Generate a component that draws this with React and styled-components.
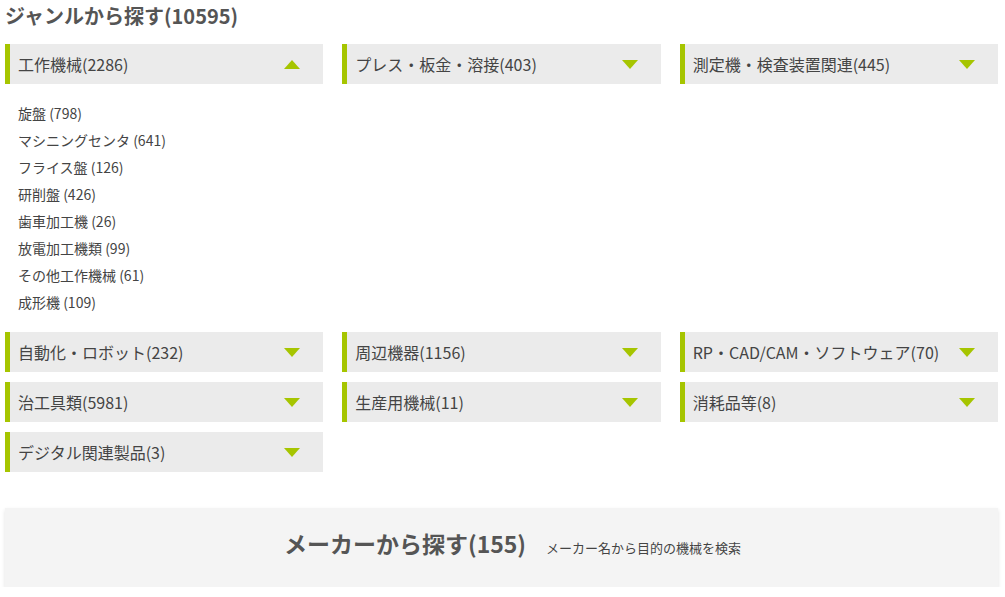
import React from 'react'
import styled, { createGlobalStyle } from 'styled-components'

const GlobalStyle = createGlobalStyle`
  html, body {
    margin: 0;
    padding: 0;
    background: #fff;
  }
  body {
    font-family: 'Noto Sans CJK JP', 'Noto Sans', sans-serif;
    color: #444;
  }
`

const genres = [
  { id: 1, label: '工作機械(2286)', open: true },
  { id: 2, label: 'プレス・板金・溶接(403)' },
  { id: 3, label: '測定機・検査装置関連(445)' },
  { id: 4, label: '自動化・ロボット(232)' },
  { id: 5, label: '周辺機器(1156)' },
  { id: 6, label: 'RP・CAD/CAM・ソフトウェア(70)' },
  { id: 7, label: '治工具類(5981)' },
  { id: 8, label: '生産用機械(11)' },
  { id: 9, label: '消耗品等(8)' },
  { id: 10, label: 'デジタル関連製品(3)' },
]

const subItems = [
  '旋盤 (798)',
  'マシニングセンタ (641)',
  'フライス盤 (126)',
  '研削盤 (426)',
  '歯車加工機 (26)',
  '放電加工機類 (99)',
  'その他工作機械 (61)',
  '成形機 (109)',
]

const App = () => {
  const first = genres.slice(0, 3)
  const rest = genres.slice(3)
  return (
    <Page>
      <GlobalStyle />
      <Title>ジャンルから探す(10595)</Title>
      <Grid>
        {first.map((g) => (
          <Genre key={g.id} {...g} />
        ))}
        <Panel>
          {subItems.map((s) => (
            <SubItem key={s}>{s}</SubItem>
          ))}
        </Panel>
        {rest.map((g) => (
          <Genre key={g.id} {...g} />
        ))}
      </Grid>
      <MakerBox>
        <MakerRow>
          <MakerTitle>メーカーから探す(155)</MakerTitle>
          <MakerSub>メーカー名から目的の機械を検索</MakerSub>
        </MakerRow>
      </MakerBox>
    </Page>
  )
}

const Genre = ({ label, open }) => {
  return (
    <GenreHead>
      <span>{label}</span>
      <Arrow $open={open} />
    </GenreHead>
  )
}

const Page = styled.div`
  width: 993px;
  padding: 0 7px 0 5px;
`

const Title = styled.h2`
  margin: 0;
  padding-top: 1px;
  height: 43px;
  font-size: 20px;
  font-weight: 700;
  line-height: 30px;
  color: #555;
`

const Grid = styled.div`
  display: grid;
  grid-template-columns: repeat(3, 1fr);
  column-gap: 19px;
  row-gap: 10px;
`

const GenreHead = styled.div`
  height: 40px;
  box-sizing: border-box;
  background: #ebebeb;
  border-left: 5px solid #a6c500;
  padding: 0 23px 0 8px;
  display: flex;
  align-items: center;
  justify-content: space-between;
  font-size: 16px;
  color: #444;
  cursor: pointer;
`

const Arrow = styled.span`
  flex-shrink: 0;
  width: 0;
  height: 0;
  border-left: 8px solid transparent;
  border-right: 8px solid transparent;
  ${(p) =>
    p.$open
      ? 'border-bottom: 9px solid #a6c500;'
      : 'border-top: 9px solid #a6c500;'}
`

const Panel = styled.ul`
  grid-column: 1 / -1;
  list-style: none;
  margin: 0;
  padding: 6px 13px;
`

const SubItem = styled.li`
  font-size: 14px;
  line-height: 27px;
  color: #444;
`

const MakerBox = styled.div`
  margin-top: 36px;
  height: 79px;
  box-sizing: border-box;
  padding-left: 22px;
  background: #f4f4f4;
  box-shadow: 0 2px 4px rgba(0, 0, 0, 0.12);
  display: flex;
  align-items: center;
  justify-content: center;
`

const MakerRow = styled.div`
  display: flex;
  align-items: baseline;
  gap: 20px;
  padding-bottom: 10px;
`

const MakerTitle = styled.h3`
  margin: 0;
  font-size: 23px;
  font-weight: 700;
  color: #555;
`

const MakerSub = styled.span`
  font-size: 13px;
  color: #444;
`

export default App
